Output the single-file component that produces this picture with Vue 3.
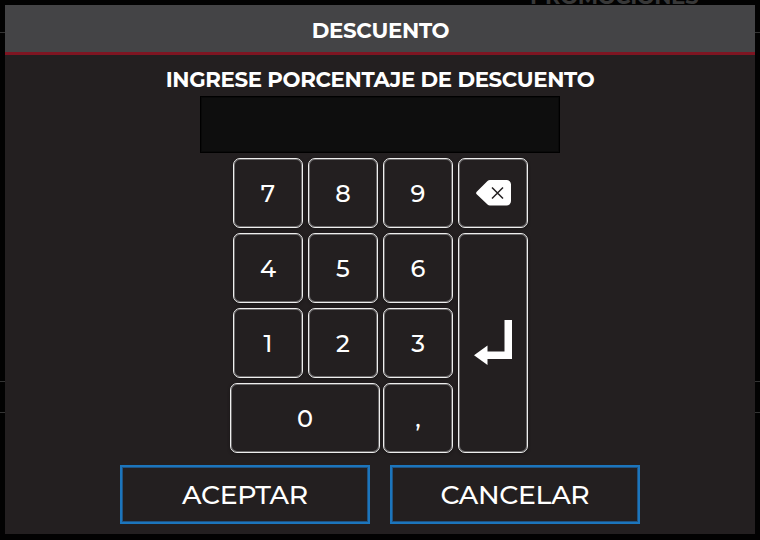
<script setup>
const keys = ['7', '8', '9', 'back', '4', '5', '6', 'enter', '1', '2', '3', '0', ',']
const names = { back: 'key-back', enter: 'key-enter', 0: 'key-zero', 1: 'key-one', ',': 'key-comma' }
</script>

<template>
  <main class="screen">
    <div class="backdrop-title">PROMOCIONES</div>
    <i class="rule rule-a"></i>
    <i class="rule rule-b"></i>
    <i class="rule rule-c"></i>
    <section class="dialog">
      <header class="header"><span class="heading">DESCUENTO</span></header>
      <div class="body">
        <h2 class="prompt">INGRESE PORCENTAJE DE DESCUENTO</h2>
        <div class="field"></div>
        <div class="pad">
          <button v-for="k in keys" :key="k" class="key" :class="names[k]">
            <svg v-if="k === 'back'" width="36" height="28" viewBox="0 0 36 28">
              <path d="M14 1H30.500A4.500 4.500 0 0 1 35 5.500V22A4.500 4.500 0 0 1 30.500 26.500H14Q12.500 26.500 11.500 25.500L0.700 15.300Q-0.500 14 0.700 12.700L11.500 2Q12.500 1 14 1Z" fill="#fff" />
              <path d="M16 8.500L27 19.500M27 8.500L16 19.500" stroke="#231f20" stroke-width="1.500" />
            </svg>
            <svg v-else-if="k === 'enter'" width="38" height="45" viewBox="0 0 38 45">
              <path d="M30.500 0H38V39H13.500V45L0 35.300L13.500 25.500V31.500H30.500Z" fill="#fff" />
            </svg>
            <span v-else>{{ k }}</span>
          </button>
        </div>
        <div class="actions">
          <button class="action accept"><span>ACEPTAR</span></button>
          <button class="action cancel"><span>CANCELAR</span></button>
        </div>
      </div>
    </section>
  </main>
</template>

<style>
body { margin: 0; background: #020202; }
</style>

<style scoped>
.screen {
  position: relative;
  width: 760px;
  height: 540px;
  box-sizing: border-box;
  padding: 5px 5px 6px;
  overflow: hidden;
  background: #020202;
  color: #fff;
  font-family: Montserrat, Inter, "Liberation Sans", sans-serif;
}
.backdrop-title {
  position: absolute;
  left: 530px;
  top: -16px;
  font-size: 21.33px;
  line-height: 24px;
  font-weight: 700;
  letter-spacing: -0.45px;
  color: #383838;
  white-space: nowrap;
}
.rule { position: absolute; left: 0; width: 760px; height: 1px; background: #343434; }
.rule-a { top: 32px; }
.rule-b { top: 381px; }
.rule-c { top: 412px; }
.dialog {
  position: relative;
  display: flex;
  flex-direction: column;
  height: 529px;
  background: #231f20;
}
.header {
  display: flex;
  align-items: center;
  justify-content: center;
  height: 50px;
  box-sizing: border-box;
  border-bottom: 3px solid #7e1522;
  padding-top: 2px;
  background: #444446;
}
.heading, .prompt {
  margin: 0;
  font-size: 21.33px;
  line-height: 26px;
  font-weight: 700;
  white-space: nowrap;
}
.heading { letter-spacing: -0.3px; padding-left: 1px; }
.prompt { letter-spacing: -0.37px; }
.body {
  display: flex;
  flex-direction: column;
  align-items: center;
  padding-top: 11px;
}
.field {
  width: 360px;
  height: 57px;
  margin-top: 4px;
  box-sizing: border-box;
  border: 1px solid #000;
  background: #0e0e0e;
  box-shadow: inset 0 0 0 1px #090909;
}
.pad {
  display: grid;
  grid-template-columns: repeat(4, 70px);
  grid-template-rows: repeat(4, 70px);
  gap: 5px;
  margin-top: 5px;
  padding-left: 1px;
}
button {
  display: flex;
  align-items: center;
  justify-content: center;
  box-sizing: border-box;
  margin: 0;
  background: transparent;
  color: #fff;
  font-family: inherit;
}
.key {
  padding: 1px 0 0;
  border: 1px solid #eee;
  border-radius: 7px;
  box-shadow: inset 0 0 0 1px #6a6869, 0 1px 3px #181516;
  font-size: 24px;
  font-weight: 500;
}
.key-back { grid-column: 4; grid-row: 1; padding: 0 0 1px 2px; }
.key-enter { grid-column: 4; grid-row: 2 / 5; padding: 0 1px 1px 0; }
.key-zero { grid-column: 1 / 3; margin: 0 -2px 0 -3px; }
.key-comma { grid-column: 3; }
.actions { display: flex; gap: 20px; margin-top: 12px; }
.action {
  width: 250px;
  height: 59px;
  padding: 0;
  border: 2px solid #1c75bc;
  box-shadow: inset 0 0 0 1px #205280;
  font-size: 26.67px;
  font-weight: 500;
  letter-spacing: -0.3px;
}
</style>
